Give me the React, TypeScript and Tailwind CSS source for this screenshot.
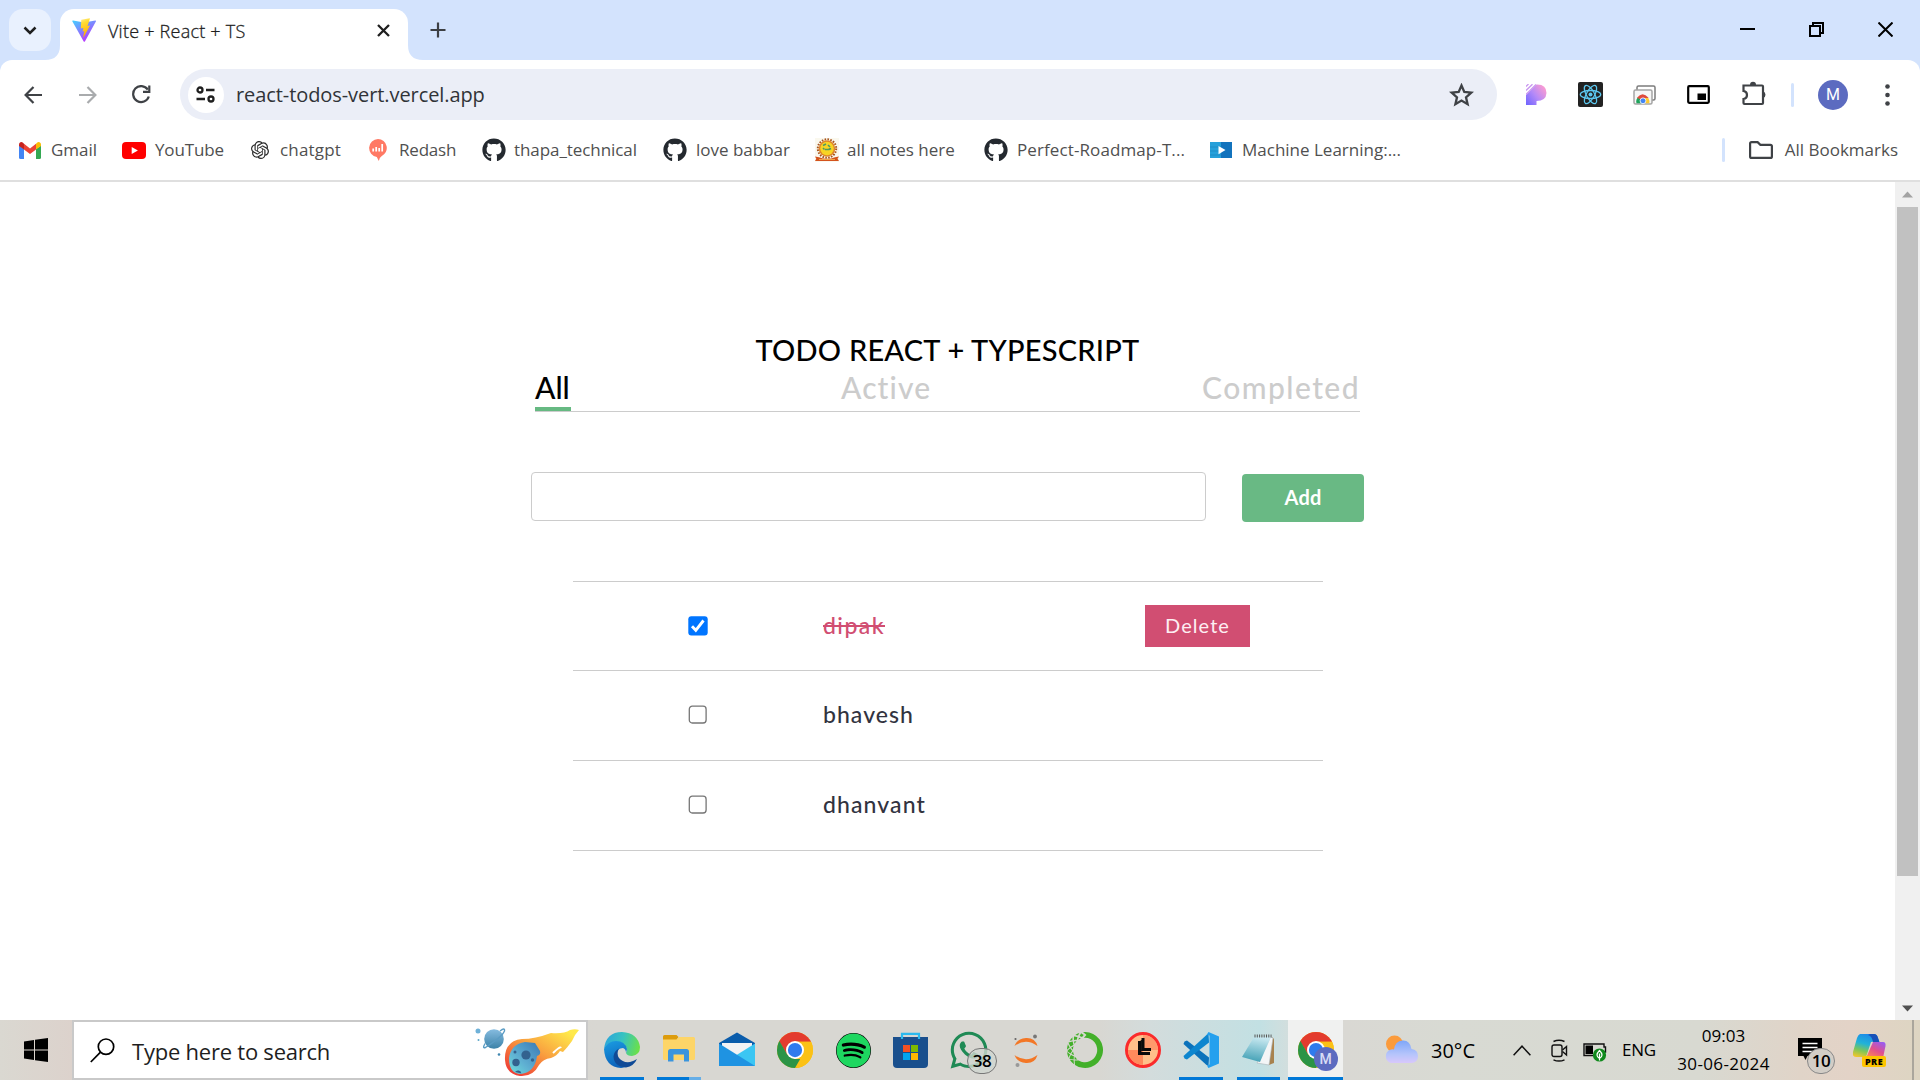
import React, { ReactNode } from "react";
import { FaGithub, FaSpotify, FaWhatsapp } from "react-icons/fa";
import { SiOpenai, SiAnaconda } from "react-icons/si";

const ViteIcon = () => (
  <svg width="25" height="25" viewBox="0 0 25 25">
    <defs>
      <linearGradient id="va" x1="0" y1="0" x2="0.6" y2="1">
        <stop offset="0" stopColor="#41d1ff" />
        <stop offset="1" stopColor="#bd34fe" />
      </linearGradient>
      <linearGradient id="vb" x1="0.4" y1="0" x2="0.6" y2="1">
        <stop offset="0" stopColor="#ffea83" />
        <stop offset="0.2" stopColor="#ffdd35" />
        <stop offset="1" stopColor="#ffa800" />
      </linearGradient>
    </defs>
    <path d="M24 3.2 12.9 23.4q-.6.9-1.2 0L.3 3.2q-.3-.8.7-.8l11.2 2L23.3 2.4q1 0 .7.8z" fill="url(#va)" />
    <path d="M17.5.2 9.3 1.8l-.5 8.6 2.6-.5-.8 3.7 1.8-.5-1.2 5.8c0 .5.3.5.6.1L18 7.600l-2.500.5L17.900.7q.1-.5-.4-.5z" fill="url(#vb)" />
  </svg>
);

const Gmail = () => (
  <svg width="22" height="17" viewBox="0 0 22 17">
    <path d="M0 3.500 5 7v10H1.500Q0 17 0 15.500z" fill="#4285f4" />
    <path d="M22 3.500 17 7v10h3.500Q22 17 22 15.500z" fill="#34a853" />
    <path d="M5 1.800 11 6.500l6-4.700V7.500L11 12 5 7.500z" fill="#ea4335" />
    <path d="M0 3.500V2.500C0 .2 2.500-.6 4 .7l1 1V7.500L0 4z" fill="#c5221f" />
    <path d="M22 3.500V2.500c0-2.300-2.500-3.100-4-1.800l-1 1V7.500L22 4z" fill="#fbbc04" />
  </svg>
);

const YouTube = () => (
  <svg width="24" height="17" viewBox="0 0 24 17">
    <rect width="24" height="17" rx="4" fill="#f00" />
    <path d="M9.700 4.900v7.200l6.200-3.600z" fill="#fff" />
  </svg>
);

const Redash = () => (
  <svg width="18" height="22" viewBox="0 0 18 22">
    <path d="M9 0a9 9 0 0 1 3.500 17.200Q10.500 18.500 9.800 22L7.800 17.900A9 9 0 0 1 9 0z" fill="#ff7964" />
    <path d="M4.200 9.500v3M7.200 8v4.500M10.200 9v3.500M13.200 5v7.500" stroke="#fff" strokeWidth="1.700" />
  </svg>
);

const NotesLogo = () => (
  <svg width="24" height="24" viewBox="0 0 24 24">
    <rect width="24" height="24" fill="#faf8ee" />
    <circle cx="12" cy="10.500" r="9.200" fill="none" stroke="#a8541c" strokeWidth="2" strokeDasharray="1.600 1.300" />
    <circle cx="12" cy="10.500" r="8.300" fill="#e0862a" />
    <circle cx="12" cy="10.500" r="6.700" fill="#f7d424" />
    <path d="M8 7.500l3-1.500M13 7l2 2M10 11.500h4l2-1M8 10l1.500 1.500" stroke="#4f9a62" strokeWidth="1.600" />
    <path d="M0 18.500l4 .8q8 3 16 0l4-.8-1.500 2.300L24 23H0l1.300-2.200z" fill="#d4531d" />
    <path d="M4 21.500h16" stroke="#f0a54a" strokeWidth="1" />
  </svg>
);

const VideoTile = () => (
  <svg width="22" height="16" viewBox="0 0 22 16">
    <rect width="22" height="16" fill="#26a0da" />
    <path d="M11 0h11v16H11z" fill="#1273bd" />
    <path d="M0 5h11M0 9h11M0 13h11" stroke="#1c8cc6" />
    <path d="M8.500 4v8.200l7-4.100z" fill="#fff" />
  </svg>
);

const Bookmark = ({ icon, w, gap, label, cls }: { icon: ReactNode; w: string; gap: string; label: string; cls?: string }) => (
  <div className={"flex shrink-0 items-center " + gap}>
    <span className="flex items-center">{icon}</span>
    <span className={"whitespace-nowrap " + w + " " + (cls ?? "")}>{label}</span>
  </div>
);

const Chrome = ({ size, id }: { size: number; id: string }) => (
  <svg width={size} height={size} viewBox="0 0 48 48">
    <clipPath id={id}>
      <circle cx="24" cy="24" r="24" />
    </clipPath>
    <g clipPath={`url(#${id})`}>
      <rect width="48" height="48" fill="#fbc116" />
      <path d="M0 0h48v13H24L13.600 30 0 8z" fill="#e33b2e" />
      <path d="M3.200 12 13.600 30 24 36h9.500L24 52-4 48V12z" fill="#2b9446" />
      <path d="M34.400 30 24 48l-2 4 30 0V13H24z" fill="#fbc116" />
    </g>
    <circle cx="24" cy="24" r="12" fill="#fff" />
    <circle cx="24" cy="24" r="9.500" fill="#2f7bed" />
  </svg>
);

const WindowBar = () => (
  <div className="flex h-[60px] items-start bg-[#d3e3fd]">
    <div className="ml-[9px] mt-[9px] flex h-[42px] w-[42px] items-center justify-center rounded-[14px] bg-[#e9f1fe]">
      <svg width="14" height="9" viewBox="0 0 14 9" fill="none" stroke="#1f1f1f" strokeWidth="2.500">
        <path d="M1.500 1.500 7 7l5.500-5.500" />
      </svg>
    </div>
    <svg className="ml-[-6px] mt-[45px] shrink-0" width="15" height="15" viewBox="0 0 15 15">
      <path d="M15 0v15H0Q15 15 15 0z" fill="#fff" />
    </svg>
    <div className="mt-[9px] flex h-[51px] w-[348px] items-center rounded-t-[14px] bg-white pb-[8px] pl-[12px]">
      <ViteIcon />
      <span className="ml-[11px] mt-[2px] w-[250px] whitespace-nowrap text-[18px] font-light tracking-[0.23px] text-[#1f1f1f] [-webkit-text-stroke:0.3px_#1f1f1f]">
        Vite + React + TS
      </span>
      <svg className="ml-[19px]" width="13" height="13" viewBox="0 0 13 13" stroke="#1f1f1f" strokeWidth="2.300">
        <path d="m1 1 11 11M12 1 1 12" />
      </svg>
    </div>
    <svg className="mt-[45px] shrink-0" width="15" height="15" viewBox="0 0 15 15">
      <path d="M0 0v15h15Q0 15 0 0z" fill="#fff" />
    </svg>
    <svg className="ml-[7px] mt-[22px]" width="16" height="16" viewBox="0 0 16 16" stroke="#3c3f43" strokeWidth="2.200">
      <path d="M8 0.500v15M.5 8h15" />
    </svg>
    <div className="ml-auto mr-[27px] flex h-[59px] items-center gap-[54px]">
      <svg width="15" height="16" viewBox="0 0 15 16">
        <path d="M0 7h15" stroke="#000" strokeWidth="2" />
      </svg>
      <svg width="15" height="15" viewBox="0 0 15 15" fill="none" stroke="#000" strokeWidth="2">
        <path d="M1 4h10v10H1zM4 4V1h10v10h-3" />
      </svg>
      <svg width="15" height="15" viewBox="0 0 15 15" stroke="#000" strokeWidth="2">
        <path d="m.5.5 14 14M14.500.5l-14 14" />
      </svg>
    </div>
  </div>
);

const Toolbar = () => (
  <div className="bg-[#d3e3fd]">
    <div className="flex h-[69px] items-center rounded-t-[12px] bg-white">
      <svg className="ml-[24px]" width="19" height="18" viewBox="0 0 19 18" fill="none" stroke="#3f4246" strokeWidth="2.200">
        <path d="M18 9H2M9.500 1 1.600 9l7.900 8" />
      </svg>
      <svg className="ml-[35px]" width="19" height="18" viewBox="0 0 19 18" fill="none" stroke="#a9abad" strokeWidth="2.200">
        <path d="M1 9h16M9.500 1l7.900 8-7.900 8" />
      </svg>
      <svg className="ml-[35px]" width="19" height="19" viewBox="0 0 19 19" fill="none" stroke="#3f4246" strokeWidth="2.200">
        <path d="M16.800 11.500A8 8 0 1 1 15.800 4.600" />
        <path d="M17.300.5v6.300H11" />
      </svg>
      <div className="ml-[29px] flex h-[51px] w-[1317px] items-center rounded-full bg-[#ebeef7]">
        <div className="ml-[8px] flex h-[36px] w-[36px] items-center justify-center rounded-full bg-white">
          <svg className="mr-[1px]" width="19" height="17" viewBox="0 0 19 17" fill="none" stroke="#1f1f1f" strokeWidth="2.300">
            <circle cx="4" cy="4" r="2.500" />
            <path d="M10 4h8.500M.5 13H9" />
            <circle cx="15" cy="13" r="2.500" />
          </svg>
        </div>
        <span className="ml-[12px] whitespace-nowrap text-[20px] tracking-[-0.08px] text-[#303338]">react-todos-vert.vercel.app</span>
        <svg className="ml-auto mr-[23px]" width="25" height="24" viewBox="0 0 25 24" fill="none" stroke="#3f4246" strokeWidth="2.300">
          <path d="m12.500 2.500 2.800 6.500 7 .6-5.300 4.700 1.600 6.900-6.100-3.700-6.100 3.700L8 14.300 2.700 9.600l7-.6z" />
        </svg>
      </div>
      <svg className="ml-[29px]" width="21" height="21" viewBox="0 0 21 21">
        <defs>
          <linearGradient id="pk" x1="1" y1="0.200" x2="0" y2="1">
            <stop offset="0" stopColor="#ff9dd0" />
            <stop offset="0.500" stopColor="#b48af8" />
            <stop offset="1" stopColor="#6d63ff" />
          </linearGradient>
        </defs>
        <path d="M0 11 10.500.4Q20.500 0 20.500 9q-.5 8-10 8v4H0z" fill="url(#pk)" />
        <path d="M0 2.500 2.500 0M0 6.500 6.500 .2M0 10.500 10 .5" stroke="#c996f0" strokeWidth="1.300" />
      </svg>
      <svg className="ml-[31px]" width="25" height="25" viewBox="0 0 25 25">
        <rect width="25" height="25" rx="2" fill="#222" />
        <g fill="none" stroke="#5cc8f0" strokeWidth="1.300">
          <ellipse cx="12.500" cy="12.500" rx="10.200" ry="4" />
          <ellipse cx="12.500" cy="12.500" rx="10.200" ry="4" transform="rotate(60 12.500 12.500)" />
          <ellipse cx="12.500" cy="12.500" rx="10.200" ry="4" transform="rotate(120 12.500 12.500)" />
        </g>
        <circle cx="12.500" cy="12.500" r="2" fill="#5cc8f0" />
      </svg>
      <svg className="ml-[30px]" width="23" height="20" viewBox="0 0 23 20">
        <rect x="4" y="1" width="18" height="14" rx="1.500" fill="#fff" stroke="#7c7c7c" strokeWidth="1.500" />
        <rect x="1" y="5" width="18" height="14" rx="1.500" fill="#f6f6f6" stroke="#a5a5a5" strokeWidth="1.500" />
        <path d="M3.500 18.200a6.300 6.300 0 0 1 2-6.500L10 18.200z" fill="#1fa35b" />
        <path d="M4 12.800q5.500-7 11.500 0l-5.500 3z" fill="#df4a3d" />
        <path d="M11 13h4.300q1.500 2.500 1 5.200H11z" fill="#fdc92f" />
        <circle cx="10" cy="15.800" r="2.900" fill="#4285f4" stroke="#fff" strokeWidth=".8" />
      </svg>
      <svg className="ml-[31px]" width="23" height="19" viewBox="0 0 23 19">
        <rect x="1.200" y="1.200" width="20.600" height="16.600" rx="1" fill="none" stroke="#000" strokeWidth="2.200" />
        <rect x="10.500" y="8.500" width="8.500" height="6.500" />
      </svg>
      <svg className="mb-[2px] ml-[31px]" width="26" height="25" viewBox="0 0 26 25">
        <path d="M2.500 4.500h18.500q1 0 1 1V22q0 1-1 1H3.500q-1 0-1-1v-4q3.500-.5 3.500-4T2.500 10z" fill="none" stroke="#3f4246" strokeWidth="2.200" />
        <path d="M9 4a3 3.300 0 0 1 6 0zM22 10.500a3 3.300 0 0 1 0 6.500z" fill="#3f4246" />
      </svg>
      <div className="ml-[24px] h-[24px] w-[3px] rounded-full bg-[#d3e3fd]" />
      <div className="ml-[24px] flex h-[30px] w-[30px] items-center justify-center rounded-full bg-[#5c6bc0] font-['Roboto',sans-serif] text-[16px] text-white">M</div>
      <svg className="ml-[37px]" width="5" height="22" viewBox="0 0 5 22" fill="#3f4246">
        <circle cx="2.500" cy="2.500" r="2.300" />
        <circle cx="2.500" cy="11" r="2.300" />
        <circle cx="2.500" cy="19.500" r="2.300" />
      </svg>
    </div>
  </div>
);

const Gh = () => <FaGithub size={24} color="#24292f" />;

const BookmarkBar = () => (
  <div className="flex h-[53px] items-center border-b-2 border-[#dfdfdf] pb-[9px] pl-[19px] text-[17px] text-[#505050]">
    <Bookmark icon={<Gmail />} gap="gap-[10px]" w="w-[71px]" label="Gmail" />
    <Bookmark icon={<YouTube />} gap="gap-[9px]" w="w-[96px]" cls="tracking-[-0.15px]" label="YouTube" />
    <Bookmark icon={<SiOpenai size={18} color="#2b2b2b" />} gap="gap-[11px]" w="w-[89px]" cls="tracking-[0.17px]" label="chatgpt" />
    <Bookmark icon={<Redash />} gap="gap-[12px]" w="w-[83px]" cls="tracking-[-0.2px]" label="Redash" />
    <Bookmark icon={<Gh />} gap="gap-[8px]" w="w-[149px]" cls="tracking-[-0.07px]" label="thapa_technical" />
    <Bookmark icon={<Gh />} gap="gap-[9px]" w="w-[119px]" label="love babbar" />
    <Bookmark icon={<NotesLogo />} gap="gap-[8px]" w="w-[137px]" label="all notes here" />
    <Bookmark icon={<Gh />} gap="gap-[9px]" w="w-[193px]" cls="tracking-[0.1px]" label="Perfect-Roadmap-T..." />
    <Bookmark icon={<VideoTile />} gap="gap-[10px]" w="w-[160px]" label="Machine Learning:..." />
    <div className="ml-auto mr-[24px] h-[24px] w-[3px] rounded-full bg-[#d3e3fd]" />
    <svg width="24" height="18" viewBox="0 0 24 18" fill="none" stroke="#3f4246" strokeWidth="2.200">
      <path d="M1.100 2.600q0-1.500 1.500-1.500h6l2.800 2.700h10q1.500 0 1.500 1.500v10.100q0 1.500-1.500 1.500H2.600q-1.500 0-1.500-1.500z" />
    </svg>
    <span className="ml-[12px] mr-[22px] whitespace-nowrap">All Bookmarks</span>
  </div>
);

const Check = ({ on }: { on: boolean }) => (
  <svg className="mb-[1px]" width="20" height="20" viewBox="0 0 20 20">
    {on ? (
      <>
        <rect x=".3" y=".2" width="19.400" height="19.400" rx="3" fill="#0075ff" />
        <path d="m4 10.300 3.800 4L15.500 4.500" fill="none" stroke="#fff" strokeWidth="2.900" />
      </>
    ) : (
      <rect x="1.300" y="1.200" width="16.800" height="16.800" rx="3" fill="#fff" stroke="#767676" strokeWidth="1.300" />
    )}
  </svg>
);

const todos = [
  { name: "dipak", done: true, h: "h-[89px]", cls: "tracking-[1.44px] text-[#d14e72] line-through decoration-[2px]" },
  { name: "bhavesh", done: false, h: "h-[90px]", cls: "tracking-[1.04px] text-[#32333f]" },
  { name: "dhanvant", done: false, h: "h-[90px]", cls: "tracking-[1.11px] text-[#32333f]" },
];

const Page = () => (
  <div className="flex h-[838px] bg-white">
    <main className="w-[1895px] font-['Lato',sans-serif]">
      <h1 className="mt-[149px] h-[38px] text-center text-[29px] font-medium leading-[38px] tracking-[0.22px] text-black">TODO REACT + TYPESCRIPT</h1>
      <div className="ml-[535px] flex h-[43px] w-[825px] items-end justify-between border-b border-[#ccc] text-[30px] font-medium text-[#ccc]">
        <span className="h-[42px] w-[36px] border-b-4 border-[#66b982] leading-[36px] text-black">All</span>
        <span className="h-[42px] w-[91px] whitespace-nowrap leading-[36px] tracking-[1.1px]">Active</span>
        <span className="h-[42px] w-[158px] whitespace-nowrap leading-[36px] tracking-[1.46px]">Completed</span>
      </div>
      <div className="ml-[531px] mt-[60px] flex w-[833px] items-start justify-between">
        <input className="h-[49px] w-[675px] rounded-[4px] border border-[#ccc] bg-white" />
        <button className="mt-[2px] h-[48px] w-[122px] rounded-[4px] bg-[#69b984] pb-[2px] text-[20px] font-bold tracking-[0.2px] text-white">Add</button>
      </div>
      <div className="ml-[573px] mt-[59px] w-[750px] border-t border-[#ccc]">
        {todos.map((t) => (
          <div key={t.name} className={"flex items-center border-b border-[#ccc] pl-[115px] " + t.h}>
            <Check on={t.done} />
            <span className="mb-[2px] ml-[115px] w-[322px]">
              <span className={"text-[23px] font-medium " + t.cls}>{t.name}</span>
            </span>
            {t.done && <button className="h-[42px] w-[105px] bg-[#d14e72] pb-[2px] text-[20px] tracking-[1.08px] text-[#fdeef2]">Delete</button>}
          </div>
        ))}
      </div>
    </main>
    <div className="flex w-[25px] flex-col items-center bg-[#f0f0f0]">
      <svg className="mt-[9px] shrink-0" width="11" height="7" viewBox="0 0 11 7">
        <path d="M0 6.500 5.500 .5l5.500 6z" fill="#a3a3a3" />
      </svg>
      <div className="mt-[9px] h-[669px] w-[21px] bg-[#c1c1c1]" />
      <svg className="mb-[8px] mt-auto shrink-0" width="11" height="7" viewBox="0 0 11 7">
        <path d="M0 .5 5.500 6.500l5.500-6z" fill="#505050" />
      </svg>
    </div>
  </div>
);

const Comet = () => (
  <svg className="mt-[3px] shrink-0" width="106" height="50" viewBox="0 0 106 50">
    <defs>
      <linearGradient id="cf" x1="0" y1="1" x2="1" y2="0">
        <stop offset="0.100" stopColor="#ef4136" />
        <stop offset="0.500" stopColor="#f9a03f" />
        <stop offset="0.900" stopColor="#ffe94a" />
      </linearGradient>
      <linearGradient id="cb" x1="1" y1="0" x2="0" y2="1">
        <stop offset="0" stopColor="#3a78b5" />
        <stop offset="0.600" stopColor="#5fb0d2" />
        <stop offset="1" stopColor="#6fe0dc" />
      </linearGradient>
      <linearGradient id="pl" x1="0" y1="0" x2="0" y2="1">
        <stop offset="0" stopColor="#86bce0" />
        <stop offset="1" stopColor="#3c82a8" />
      </linearGradient>
    </defs>
    <circle cx="3" cy="4" r="2.500" fill="#6fb1d8" />
    <circle cx="3.500" cy="13" r="1" fill="#5aa5c8" />
    <circle cx="24" cy="27.500" r="1.300" fill="#3f86b0" />
    <circle cx="19" cy="12" r="9.800" fill="url(#pl)" />
    <path d="M25 4q5-4 4.500 0Q27 10 10.500 20.500q-3.500 1.500-.5-4" fill="none" stroke="#5b9cc4" strokeWidth="1.400" />
    <path d="M30 33Q29 14 47 12 60 12 76 6q13 1 19-3 5-1.500 9 0-4 4-7 11-5 7-9 11l-3-1q-3 5-9 7-8 1-12 7-6 12-19 11Q31 47 30 33z" fill="url(#cf)" />
    <path d="M78 26q7-7 8-5" stroke="#fff" strokeWidth="2" fill="none" />
    <path d="M34 31Q36 17 50 15l10 1 5 8q1 4-3 5-2 16-16 18-12 0-12-16z" fill="url(#cb)" />
    <circle cx="51" cy="28" r="4.600" fill="#33628f" />
    <circle cx="41" cy="35.500" r="3.700" fill="#33628f" />
    <circle cx="40" cy="25" r="1.500" fill="#33628f" />
    <circle cx="57.500" cy="33" r="1.700" fill="#33628f" />
    <path d="M40 45a3.600 3.600 0 0 1 6.500 1.500z" fill="#33628f" />
  </svg>
);

const Edge = () => (
  <svg width="36" height="36" viewBox="0 0 36 36">
    <defs>
      <linearGradient id="e1" x1="0" y1="0.300" x2="1" y2="0.500">
        <stop offset="0" stopColor="#2ba5dc" />
        <stop offset="0.500" stopColor="#36c3c0" />
        <stop offset="1" stopColor="#6be04a" />
      </linearGradient>
      <linearGradient id="e2" x1="0" y1="0" x2="0.300" y2="1">
        <stop offset="0" stopColor="#1b9de2" />
        <stop offset="1" stopColor="#0b63bb" />
      </linearGradient>
    </defs>
    <path d="M0 17Q2 0 18 0q16 1 18 15 0 8-8 9-5 0-6-3 2-3 0-6-3-5-9-5Q4 10 0 17z" fill="url(#e1)" />
    <path d="M0 17q4-8 12-8 9 0 11 8l-1 4q0-4-3-5-6 0-6 6 1 10 12 11-5 3-8 3Q1 35 0 17z" fill="url(#e2)" />
    <path d="M15 16.500q-3 5 0 9.500 4 5 11 4 4-1 7-3-3 7-11 8.500-12-1-12.500-11Q10 19 15 16.500z" fill="#0f4a96" />
  </svg>
);

const Explorer = () => (
  <svg width="32" height="28" viewBox="0 0 32 28">
    <path d="M0 1.500Q0 0 1.500 0h12l2 2-2 3H0z" fill="#dd9c0d" />
    <path d="M0 4.500h13.500L16 2h14.500Q32 2 32 3.500v20q0 1.500-1.500 1.500h-29Q0 25 0 23.500z" fill="#fdd568" />
    <path d="M5 26.500V16.500q0-2.500 2.500-2.500h16q2.500 0 2.500 2.500v10h-5v-7H10.500v7z" fill="#3a95dd" />
  </svg>
);

const Mail = () => (
  <svg width="36" height="34" viewBox="0 0 36 34">
    <path d="M0 11 18 .5 36 11v6H0z" fill="#0a5cab" />
    <path d="M3 11h30v9L18 26 3 20z" fill="#f2f2f4" />
    <path d="M36 11.500 0 34h36z" fill="#3bc6f3" />
    <path d="M0 11.500 36 34H0z" fill="#1f93e2" />
  </svg>
);

const Store = () => (
  <svg width="35" height="36" viewBox="0 0 35 36">
    <path d="M9 7V1.800h17V7" fill="none" stroke="#2bb9ee" strokeWidth="2.200" />
    <path d="M0 5h35v27q0 4-4 4H4q-4 0-4-4z" fill="#194f8d" />
    <path d="M9 4.500v2.500M26 4.500v2.500" stroke="#2bb9ee" strokeWidth="2.200" />
    <path d="M10 13h7v7h-7z" fill="#f25022" />
    <path d="M18 13h7v7h-7z" fill="#7fba00" />
    <path d="M10 21h7v7h-7z" fill="#00a4ef" />
    <path d="M18 21h7v7h-7z" fill="#ffb900" />
  </svg>
);

const Jupyter = () => (
  <svg width="24" height="34" viewBox="0 0 24 34">
    <path d="M.5 13Q3 5.500 12 5t11.500 8Q12 4.500.5 13zM.5 22Q3 29.500 12 30t11.500-8Q12 30.500.5 22z" fill="#f37726" />
    <circle cx="21" cy="3.500" r="1.900" fill="#777" />
    <circle cx="1.500" cy="6" r="1.100" fill="#666" />
    <circle cx="3.500" cy="32" r="2" fill="#999" />
  </svg>
);

const Clock = () => (
  <svg width="36" height="36" viewBox="0 0 36 36">
    <circle cx="18" cy="18" r="16.500" fill="#ffc08a" stroke="#fb2b2b" strokeWidth="3" />
    <path d="M18 18H3a15 15 0 0 0 15 15z" fill="#ff8a5c" />
    <path d="M18 18h15A15 15 0 0 0 18 3z" fill="#ff9a6c" />
    <path d="M14.500 9v12.500H25M18 6v11.500h8" fill="none" stroke="#0b0b0b" strokeWidth="3" />
    <path d="M16.300 8v11.500" stroke="#0b0b0b" strokeWidth="1.200" />
  </svg>
);

const VsCode = () => (
  <svg width="36" height="36" viewBox="0 0 36 36">
    <path d="M1.500 9.500 4 8.500l22 17-.5 8.500-2-1L.5 12z" fill="#0b72bb" />
    <path d="M1.500 26.500 4 27.500l22-17L25.500 2l-2 1L.5 24z" fill="#0d86cf" />
    <path d="M25.500 0 36 4.500v27L25.500 36q-1.500-1-1-3l2-.5v-29L23.500 3z" fill="#24a0ee" />
  </svg>
);

const Notepad = () => (
  <svg width="34" height="32" viewBox="0 0 34 32">
    <defs>
      <linearGradient id="np" x1="0.500" y1="0" x2="0.300" y2="1">
        <stop offset="0" stopColor="#c8e8f0" />
        <stop offset="1" stopColor="#3f9fb4" />
      </linearGradient>
    </defs>
    <path d="M30 3l2 2v24l-5 2z" fill="#a8824e" />
    <path d="M28.500 3 31 4l-4 27-12-2z" fill="#f3f5f6" stroke="#a9b3b8" strokeWidth=".6" />
    <path d="M12 3h17L18 28 0 23z" fill="url(#np)" />
    <path d="M12.500 2h17" stroke="#555" strokeWidth="3" strokeDasharray="1 1.300" />
  </svg>
);

const Weather = () => (
  <svg width="34" height="29" viewBox="0 0 34 29">
    <defs>
      <linearGradient id="wc" x1="0" y1="0" x2="0" y2="1">
        <stop offset="0" stopColor="#7ea6f8" />
        <stop offset="0.600" stopColor="#b4c4fb" />
        <stop offset="1" stopColor="#d8c8fb" />
      </linearGradient>
    </defs>
    <circle cx="10.500" cy="9" r="8.500" fill="#fb9b3c" />
    <path d="M7 28a7 7 0 0 1 0-13.500q2-.5 3 0Q11 6 18.500 5.500T27.500 14q6.500 1 6.500 7t-6 7z" fill="url(#wc)" />
  </svg>
);

const Camera = () => (
  <svg width="17" height="23" viewBox="0 0 17 23" fill="none" stroke="#111" strokeWidth="1.400">
    <rect x="1" y="6" width="10" height="11.500" rx="2" />
    <path d="m11.500 11 4-3.500v8.500l-4-3.500M2.500 2.500Q8 0 13.500 2.500M2.500 20.800q5.500 2.500 11 0" />
  </svg>
);

const Battery = () => (
  <svg width="24" height="19" viewBox="0 0 24 19">
    <path d="M1 1h20v3h1.500v5H21v3.500H1z" fill="none" stroke="#111" strokeWidth="1.400" />
    <path d="M2.500 2.500h7.500v8.500H2.500z" />
    <circle cx="16.500" cy="12" r="6.600" fill="#0f8a1c" />
    <path d="M16.500 7.500q-5 5 0 8 5-3 0-8zM16.500 10.500v7" fill="none" stroke="#fff" strokeWidth="1.200" />
  </svg>
);

const Copilot = () => (
  <div className="relative h-[34px] w-[33px]">
    <svg width="33" height="26" viewBox="0 0 33 26">
      <defs>
        <linearGradient id="c1" x1="0.500" y1="0" x2="0.200" y2="1">
          <stop offset="0" stopColor="#1c8be8" />
          <stop offset="0.400" stopColor="#21b3d8" />
          <stop offset="0.700" stopColor="#7cc65a" />
          <stop offset="1" stopColor="#f0c62c" />
        </linearGradient>
        <linearGradient id="c2" x1="0.800" y1="0" x2="0.200" y2="1">
          <stop offset="0" stopColor="#9a5cf0" />
          <stop offset="0.500" stopColor="#e0508c" />
          <stop offset="1" stopColor="#ff8a50" />
        </linearGradient>
      </defs>
      <path d="M7 0h14q3 0 4 4l1 3-8 1-5 15H3Q-1 23 0 18L4 4q1-3 3-4z" fill="url(#c1)" />
      <path d="M17 0h4q3 0 4 4l1.500 4H20Q19 2 15 1z" fill="#1850b8" />
      <path d="M20 8h10q3 0 2.500 4L30 24H13z" fill="url(#c2)" />
    </svg>
    <span className="absolute left-[9px] top-[22px] flex h-[11px] w-[24px] items-center justify-center rounded-[2px] bg-[#fdc500] text-[9px] font-extrabold tracking-[0.5px] text-black">PRE</span>
  </div>
);

const TaskItem = ({ w, bar, on, children }: { w: string; bar?: string; on?: boolean; children: ReactNode }) => (
  <div className={"flex h-[60px] shrink-0 flex-col items-center " + w + (on ? " bg-[#f0f1f0]" : "")}>
    <div className="relative flex h-[57px] items-center justify-center pt-[3px]">{children}</div>
    {bar && <div className={"h-[3px] bg-[#0078d7] " + bar} />}
  </div>
);

const Taskbar = () => (
  <div className="flex h-[60px] items-center bg-[linear-gradient(90deg,#dad8d1_0px,#dcd2cc_72px,#d8d7d2_600px,#d8d7d2_1100px,#d3dcdc_1150px,#c2e0e3_1260px,#d3dedd_1290px,#d9d8d3_1345px,#d8dad3_1450px,#d8d9d1_1700px,#e0d4c8_1800px,#e3d3c7_1850px,#ddd5c2_1920px)]">
    <div className="flex w-[72px] justify-center">
      <svg width="24" height="24" viewBox="0 0 24 24">
        <path d="M0 3.400 10 2v9.500H0zM11 1.800 24 0v11.500H11zM0 12.500h10V22L0 20.600zM11 12.500h13V24l-13-1.800z" />
      </svg>
    </div>
    <div className="flex h-[60px] w-[516px] shrink-0 items-center border-2 border-[#c9c9c9] bg-white">
      <svg className="ml-[16px]" width="25" height="25" viewBox="0 0 25 25" fill="none" stroke="#000" strokeWidth="1.700">
        <circle cx="16" cy="8.700" r="7.700" />
        <path d="M10.500 14.200.8 24" />
      </svg>
      <span className="ml-[17px] mt-[3px] w-[343px] whitespace-nowrap text-[22px] tracking-[-0.23px] text-[#1e1e1e]">Type here to search</span>
      <Comet />
    </div>
    <TaskItem w="w-[67px]" bar="w-[44px]"><Edge /></TaskItem>
    <div className="flex h-[60px] w-[48px] flex-col items-center">
      <div className="flex h-[57px] items-center"><Explorer /></div>
      <div className="flex h-[3px] w-[44px] bg-[#0078d7]"><div className="ml-auto w-[12px] bg-[#66aee7]" /></div>
    </div>
    <TaskItem w="w-[68px]"><div className="pb-[2px]"><Mail /></div></TaskItem>
    <TaskItem w="w-[48px]"><Chrome size={36} id="ch1" /></TaskItem>
    <TaskItem w="w-[68px]"><FaSpotify size={35} color="#1ed760" className="rounded-full bg-black" /></TaskItem>
    <TaskItem w="w-[46px]"><Store /></TaskItem>
    <TaskItem w="w-[72px]">
      <FaWhatsapp size={42} color="#1f8a55" />
      <span className="absolute left-[19px] top-[28px] flex h-[26px] w-[30px] items-center justify-center rounded-full border border-[#777] bg-[#d0d6d0]/80 text-[17px] font-semibold tracking-[-0.5px] text-black">38</span>
    </TaskItem>
    <TaskItem w="w-[42px]"><Jupyter /></TaskItem>
    <TaskItem w="w-[76px]"><SiAnaconda size={36} color="#43b02a" /></TaskItem>
    <TaskItem w="w-[40px]"><Clock /></TaskItem>
    <TaskItem w="w-[76px]" bar="w-[44px]"><VsCode /></TaskItem>
    <TaskItem w="w-[39px]" bar="w-[43px]"><Notepad /></TaskItem>
    <div className="w-[10px] shrink-0" />
    <TaskItem w="w-[55px]" on bar="w-[55px]">
      <Chrome size={36} id="ch2" />
      <span className="absolute left-[16px] top-[27px] flex h-[24px] w-[24px] items-center justify-center rounded-full bg-[#5c6bc0] font-['Roboto',sans-serif] text-[14px] font-medium text-[#d8dcf4]">M</span>
    </TaskItem>
    <div className="mb-[1px] ml-[41px] flex items-center text-black">
      <Weather />
      <span className="ml-[13px] mt-[2px] w-[44px] whitespace-nowrap text-[20px]">30°C</span>
    </div>
    <svg className="ml-[38px]" width="18" height="11" viewBox="0 0 18 11" fill="none" stroke="#111" strokeWidth="1.500">
      <path d="m.6 10.200 8.400-9 8.400 9" />
    </svg>
    <div className="ml-[20px]"><Camera /></div>
    <div className="ml-[15px] pt-[5px]"><Battery /></div>
    <span className="ml-[15px] w-[35px] text-[17px] tracking-[-0.2px]">ENG</span>
    <div className="ml-[18px] flex w-[97px] flex-col items-center text-[17px] leading-[28px]">
      <span>09:03</span>
      <span className="whitespace-nowrap tracking-[0.4px]">30-06-2024</span>
    </div>
    <div className="relative ml-[26px] h-[60px] w-[37px]">
      <svg className="mt-[18px]" width="24" height="24" viewBox="0 0 24 24">
        <path d="M0 0h24v18H9.500l-2 4-2-4H0z" />
        <path d="M4.500 5.500h15M4.500 9.500h15M4.500 13.500h10" stroke="#fff" strokeWidth="1.500" />
      </svg>
      <span className="absolute left-[9px] top-[28px] flex h-[26px] w-[28px] items-center justify-center rounded-full border border-[#888] bg-[#d2cdc6] text-[17px] font-semibold tracking-[-0.5px] text-black">10</span>
    </div>
    <div className="ml-[18px] mt-[2px]"><Copilot /></div>
    <div className="ml-auto mr-[6px] h-[60px] w-[2px] bg-[#aaa69c]" />
  </div>
);

export default function App() {
  return (
    <div className="flex h-[1080px] w-[1920px] flex-col overflow-hidden bg-white font-['Open_Sans',sans-serif]">
      <WindowBar />
      <Toolbar />
      <BookmarkBar />
      <Page />
      <Taskbar />
    </div>
  );
}
